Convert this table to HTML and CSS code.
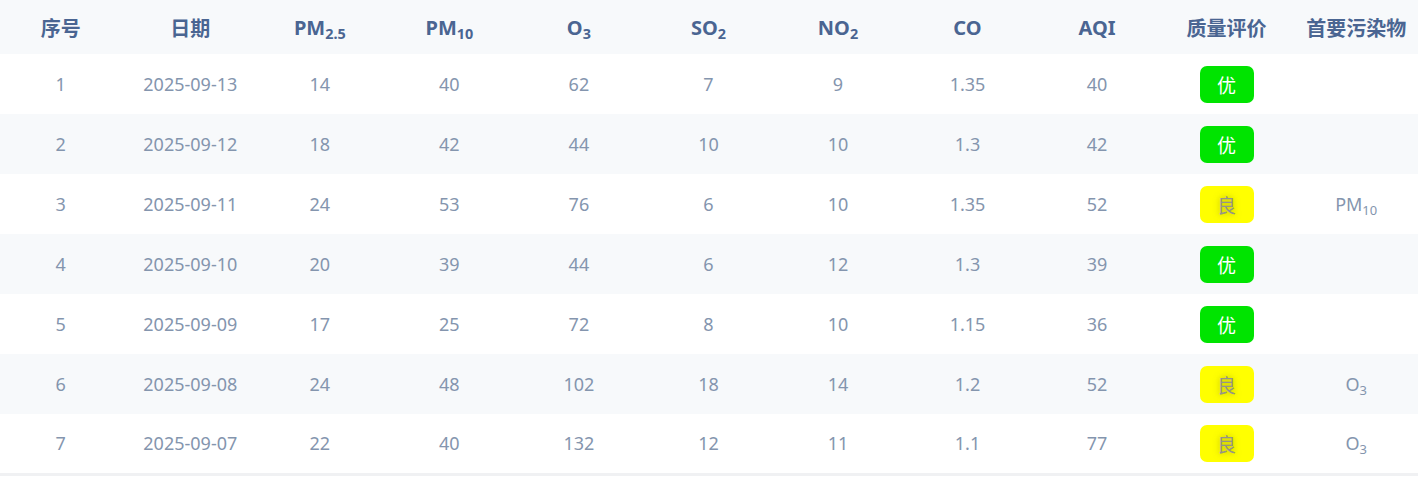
FILE: index.html
```html
<!DOCTYPE html>
<html lang="zh-CN">
<head>
<meta charset="utf-8">
<title>空气质量</title>
<link rel="stylesheet" href="styles.css">
</head>
<body>
<div class="wrap">
<table class="aq">
  <thead>
    <tr>
      <th>序号</th><th>日期</th><th>PM<sub>2.5</sub></th><th>PM<sub>10</sub></th><th>O<sub>3</sub></th><th>SO<sub>2</sub></th><th>NO<sub>2</sub></th><th>CO</th><th>AQI</th><th>质量评价</th><th>首要污染物</th>
    </tr>
  </thead>
  <tbody>
    <tr><td>1</td><td>2025-09-13</td><td>14</td><td>40</td><td>62</td><td>7</td><td>9</td><td>1.35</td><td>40</td><td><span class="badge good">优</span></td><td></td></tr>
    <tr><td>2</td><td>2025-09-12</td><td>18</td><td>42</td><td>44</td><td>10</td><td>10</td><td>1.3</td><td>42</td><td><span class="badge good">优</span></td><td></td></tr>
    <tr><td>3</td><td>2025-09-11</td><td>24</td><td>53</td><td>76</td><td>6</td><td>10</td><td>1.35</td><td>52</td><td><span class="badge fair">良</span></td><td>PM<sub>10</sub></td></tr>
    <tr><td>4</td><td>2025-09-10</td><td>20</td><td>39</td><td>44</td><td>6</td><td>12</td><td>1.3</td><td>39</td><td><span class="badge good">优</span></td><td></td></tr>
    <tr><td>5</td><td>2025-09-09</td><td>17</td><td>25</td><td>72</td><td>8</td><td>10</td><td>1.15</td><td>36</td><td><span class="badge good">优</span></td><td></td></tr>
    <tr><td>6</td><td>2025-09-08</td><td>24</td><td>48</td><td>102</td><td>18</td><td>14</td><td>1.2</td><td>52</td><td><span class="badge fair">良</span></td><td>O<sub>3</sub></td></tr>
    <tr><td>7</td><td>2025-09-07</td><td>22</td><td>40</td><td>132</td><td>12</td><td>11</td><td>1.1</td><td>77</td><td><span class="badge fair">良</span></td><td>O<sub>3</sub></td></tr>
  </tbody>
</table>
</div>
</body>
</html>
```
FILE: styles.css
```css
html, body {
  margin: 0;
  padding: 0;
  overflow: hidden;
  background: #ffffff;
}
.wrap {
  width: 1418px;
  overflow: hidden;
}
.aq {
  width: 1425px;
  margin-left: -4px;
  border-collapse: collapse;
  table-layout: fixed;
  font-family: "Noto Sans", "Noto Sans CJK SC", sans-serif;
  border-bottom: 3px solid #f0f1f3;
}
.aq th, .aq td {
  text-align: center;
  padding: 0;
  white-space: nowrap;
}
.aq thead tr {
  height: 54px;
  background: #f7f9fb;
}
.aq th {
  font-size: 20px;
  font-weight: 700;
  color: #4a6592;
  font-family: "Noto Sans", "Noto Sans CJK SC", sans-serif;
}
.aq tbody tr {
  height: 60px;
}
.aq tbody tr:nth-child(even) {
  background: #f7f9fb;
}
.aq td {
  font-size: 18px;
  font-weight: 400;
  color: #8495ae;
}
.aq sub {
  font-size: 0.72em;
  vertical-align: -0.3em;
  line-height: 0;
}
.badge {
  display: inline-block;
  width: 54px;
  height: 37px;
  line-height: 37px;
  border-radius: 7px;
  font-family: "Noto Sans CJK SC", sans-serif;
  font-size: 19px;
  font-weight: 400;
  vertical-align: middle;
}
.badge.good {
  background: #00e400;
  color: #ffffff;
}
.badge.fair {
  background: #ffff00;
  color: #949488;
  text-shadow: 0 0 6px rgba(110, 110, 0, 0.55);
}
```
